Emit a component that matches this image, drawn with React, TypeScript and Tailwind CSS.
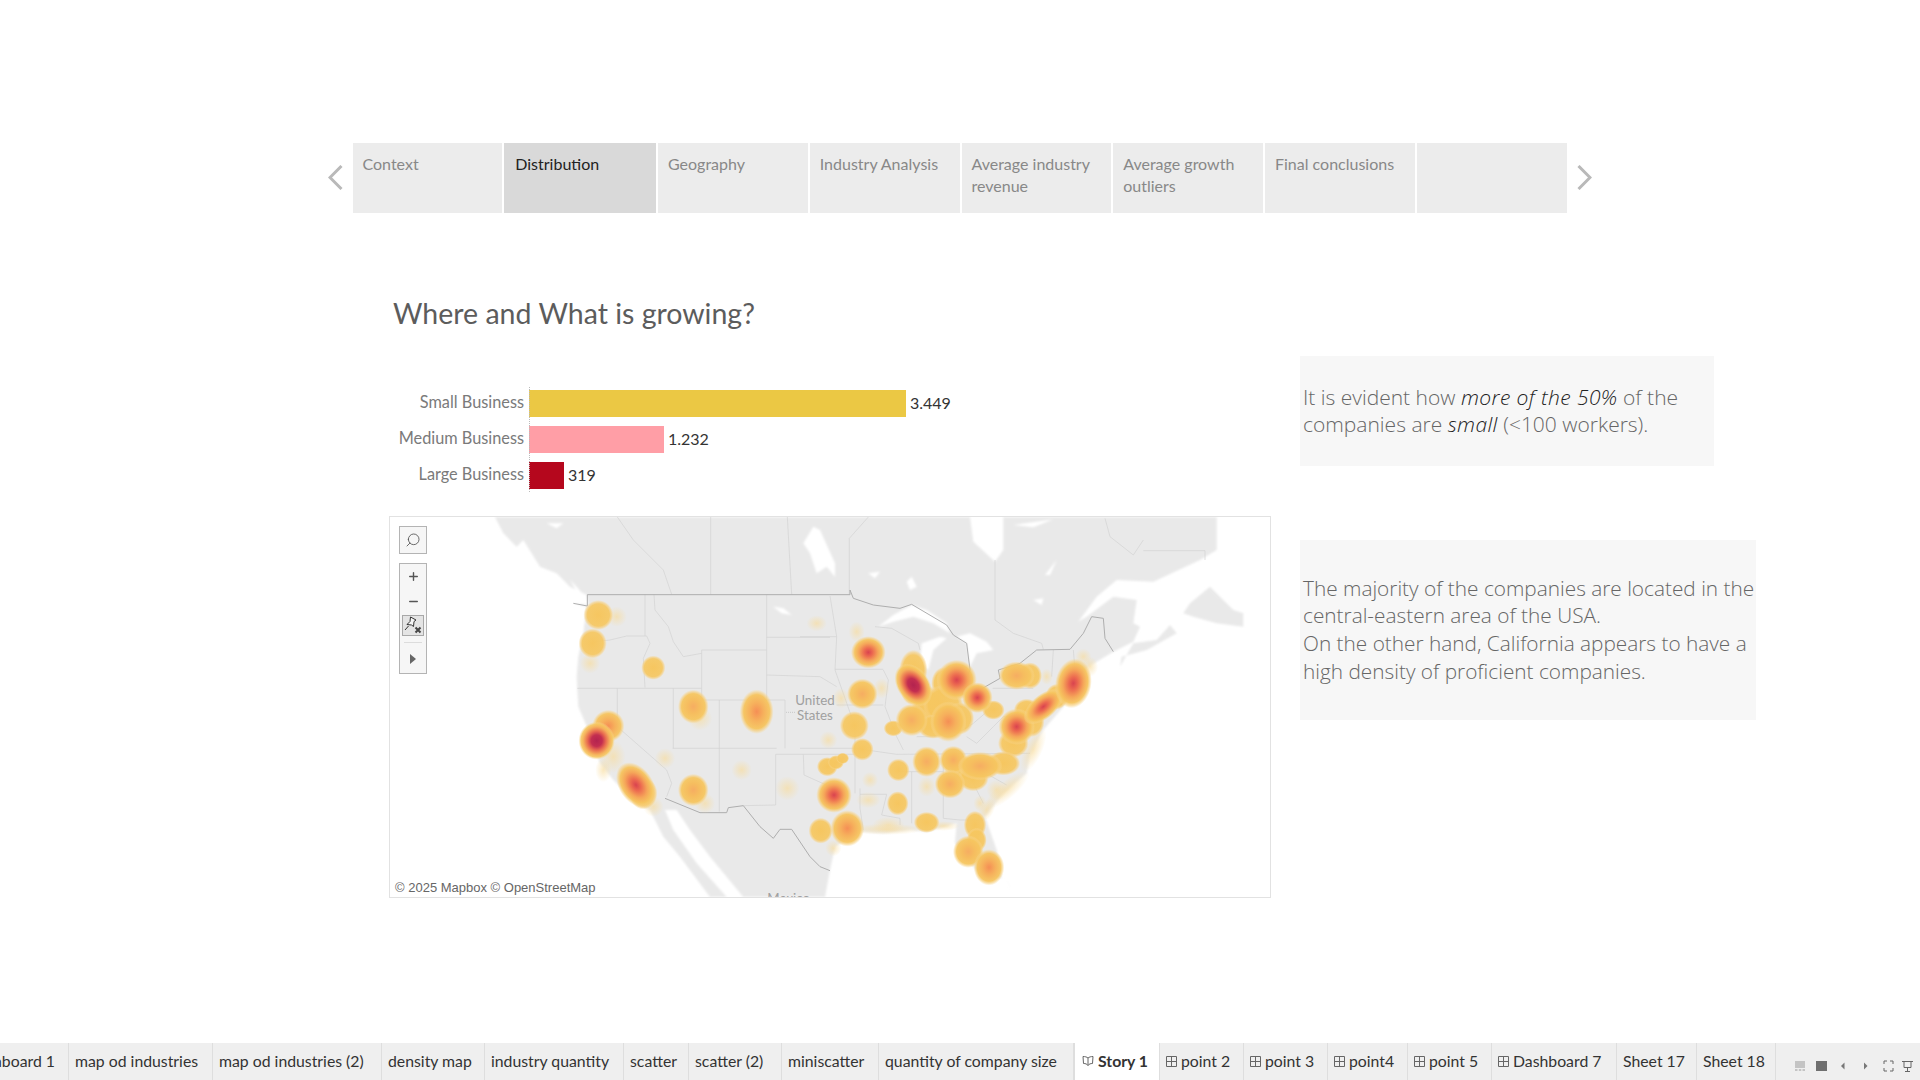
import { Minus, Plus, Search } from "lucide-react";

const storyPoints = [
  "Context",
  "Distribution",
  "Geography",
  "Industry Analysis",
  "Average industry revenue",
  "Average growth outliers",
  "Final conclusions",
  "",
];

const bars = [
  { label: "Small Business", value: "3.449", width: 377, color: "#ebc844" },
  { label: "Medium Business", value: "1.232", width: 135, color: "#ff9ea6" },
  { label: "Large Business", value: "319", width: 35, color: "#b5071d" },
];

const sheetTabs = [
  { label: "map od industries", w: 144 },
  { label: "map od industries (2)", w: 169 },
  { label: "density map", w: 103 },
  { label: "industry quantity", w: 139 },
  { label: "scatter", w: 65 },
  { label: "scatter (2)", w: 93 },
  { label: "miniscatter", w: 97 },
  { label: "quantity of company size", w: 195 },
];

const dashTabs = [
  { label: "point 2", w: 84, grid: true },
  { label: "point 3", w: 84, grid: true },
  { label: "point4", w: 80, grid: true },
  { label: "point 5", w: 84, grid: true },
  { label: "Dashboard 7", w: 125, grid: true },
  { label: "Sheet 17", w: 80, grid: false },
  { label: "Sheet 18", w: 79, grid: false },
];

// map coordinates are 3x page px, origin at page (380, 510)
const E = 1260;
const east = (pts: number[][]) => pts.map(([x, y]) => `${x + E},${y}`).join(" ");
const west = (pts: number[][]) => pts.map(([x, y]) => `${x},${y}`).join(" ");

const landPoints =
  west([[345, 21], [370, 70], [410, 110], [430, 90], [480, 170], [530, 190], [570, 230], [620, 255], [625, 285], [580, 280], [620, 290], [610, 370], [595, 440], [590, 500], [595, 590], [625, 660], [660, 760], [700, 810], [770, 880], [810, 900], [850, 980], [900, 1040], [990, 1161]]) +
  " " +
  east([[75, 1161], [90, 1080], [105, 1010], [180, 965], [250, 970], [330, 960], [380, 965], [470, 940], [465, 1000], [540, 1095], [605, 1105], [590, 1020], [555, 920], [610, 850], [680, 790], [690, 735], [730, 660], [790, 590], [865, 470], [940, 425], [1000, 395], [1020, 350], [1000, 340], [1010, 270], [940, 260], [860, 320], [835, 335], [890, 260], [950, 210], [1060, 215], [1200, 150], [1250, 120], [1250, 21], [610, 21], [610, 120], [585, 155], [520, 95], [510, 21]]);

const extraLand = [
  east([[960, 470], [965, 440], [1040, 420], [1130, 370], [1110, 345], [1070, 390], [1000, 400]]),
  east([[1150, 310], [1170, 280], [1230, 230], [1260, 260], [1300, 300], [1330, 310], [1330, 350], [1250, 340], [1180, 320]]),
  east([[615, 1105], [640, 1145], [625, 1120]]),
];

const water = [
  west([[855, 900], [890, 900], [930, 960], [990, 1040], [1090, 1161], [1040, 1161], [950, 1060], [880, 960]]),
  east([[235, 350], [280, 315], [335, 285], [380, 300], [440, 340], [450, 370], [400, 340], [340, 320], [280, 335]]),
  east([[360, 460], [365, 400], [420, 380], [440, 385], [400, 420], [385, 480]]),
  east([[470, 380], [500, 400], [510, 470], [530, 430], [580, 420], [560, 395], [510, 370]]),
  east([[10, 100], [40, 50], [60, 60], [105, 160], [105, 200], [80, 170], [50, 190], [30, 130]]),
  east([[320, 215], [335, 200], [350, 230], [330, 240]]),
  east([[735, 195], [770, 150], [750, 195]]),
  east([[640, 45], [760, 28], [700, 52]]),
  east([[700, 270], [730, 265], [725, 285]]),
  east([[205, 190], [240, 185], [225, 205]]),
  west([[1180, 290], [1210, 295], [1235, 315], [1205, 310]]),
  west([[570, 210], [590, 230], [615, 260], [590, 245]]),
  west([[500, 40], [550, 40], [530, 55]]),
];

const darkBorders = [
  west([[622, 254], [1350, 254]]) + " " + east([[150, 254], [150, 240], [160, 265], [220, 285], [300, 295], [335, 283], [440, 345], [460, 375], [500, 400], [510, 480], [490, 530], [530, 545], [600, 505], [595, 480], [660, 460], [710, 420], [810, 418], [850, 370], [875, 320], [910, 325], [915, 385], [940, 425]]),
  west([[855, 865], [960, 908], [1040, 908], [1045, 893], [1090, 887], [1140, 950], [1180, 985], [1200, 958], [1235, 958], [1290, 1040], [1320, 1070], [1350, 1082]]),
  west([[580, 280], [622, 288], [622, 254]]),
];

const lightBorders = [
  west([[712, 21], [760, 90], [850, 180], [875, 253]]),
  west([[992, 21], [992, 253]]),
  west([[1222, 21], [1235, 253]]),
  east([[205, 21], [148, 85], [148, 253]]),
  east([[585, 150], [585, 330], [640, 370], [725, 400], [730, 418]]),
  east([[915, 25], [930, 80], [1000, 135], [1030, 90]]),
  east([[1030, 122], [1215, 122], [1215, 150]]),
  west([[795, 254], [795, 378]]),
  west([[640, 395], [690, 390], [740, 378], [800, 378], [810, 400], [790, 445], [795, 533]]),
  west([[592, 535], [965, 535]]),
  west([[712, 535], [712, 650], [860, 780], [875, 820], [860, 860]]),
  west([[822, 254], [825, 300], [865, 350], [880, 395], [910, 440], [965, 430]]),
  west([[965, 420], [1160, 420]]),
  west([[965, 420], [965, 570], [1215, 570], [1215, 715]]),
  west([[880, 535], [880, 715]]),
  west([[1018, 570], [1018, 905]]),
  west([[878, 715], [1190, 715]]),
  west([[1160, 254], [1160, 570]]),
  west([[1160, 382], [1350, 382]]),
  west([[1160, 495], [1320, 500], [1370, 530]]),
  west([[1187, 733], [1187, 885], [1090, 887]]),
  west([[1187, 733], [1270, 733], [1272, 795], [1350, 830]]),
  east([[90, 258], [110, 380], [105, 480], [165, 650], [165, 850]]),
  east([[0, 380], [110, 380]]),
  east([[105, 478], [250, 478]]),
  east([[0, 715], [165, 715], [290, 733], [690, 730]]),
  east([[10, 733], [165, 733]]),
  east([[180, 835], [180, 895], [190, 960]]),
  east([[180, 853], [260, 853], [245, 915], [300, 925], [300, 945]]),
  east([[335, 785], [335, 940]]),
  east([[430, 755], [430, 925], [480, 930], [550, 930]]),
  east([[290, 785], [430, 785]]),
  east([[225, 350], [275, 355], [355, 400], [360, 420]]),
  east([[110, 585], [250, 585]]),
  east([[250, 480], [265, 510], [255, 590], [290, 680], [310, 720]]),
  east([[350, 680], [400, 680], [490, 660], [520, 640], [555, 610]]),
  east([[500, 680], [530, 700], [580, 650], [610, 620], [690, 620]]),
  east([[578, 535], [700, 535]]),
  east([[760, 420], [755, 500]]),
  east([[820, 420], [825, 480]]),
  east([[480, 795], [540, 780], [620, 825]]),
  east([[510, 800], [550, 880]]),
];

type Heat = "faint" | "y" | "light" | "o" | "r" | "d";
type Blob = [number, number, number, number, Heat, number?];

const blobs: Blob[] = [
  [655, 315, 37, 37, "y"], [638, 400, 35, 37, "y"], [820, 473, 30, 30, "y"], [940, 590, 38, 42, "light"],
  [1130, 605, 42, 55, "o"], [685, 648, 40, 40, "o"], [650, 692, 45, 47, "d"], [790, 850, 35, 40, "y"],
  [768, 825, 42, 62, "r", -35], [940, 840, 38, 40, "light"],
  [855, 745, 25, 25, "faint"], [1085, 780, 25, 25, "faint"], [1222, 835, 30, 30, "faint"], [630, 460, 25, 25, "faint"],
  [710, 320, 25, 25, "faint"], [960, 625, 30, 30, "faint"], [700, 740, 30, 40, "faint"], [975, 880, 25, 25, "faint"],
  [670, 780, 20, 30, "faint"], [820, 890, 25, 25, "faint"],
  ...(
    [
      [205, 427, 43, 40, "r"], [187, 552, 38, 38, "light"], [123, 565, 20, 25, "faint"], [245, 535, 20, 25, "faint"],
      [163, 647, 36, 36, "y"], [85, 690, 22, 22, "faint"], [187, 718, 28, 28, "y"],
      [82, 770, 26, 24, "y"], [108, 757, 20, 18, "y"], [128, 745, 16, 14, "y"],
      [102, 855, 44, 44, "r"], [62, 962, 30, 32, "y"], [142, 955, 42, 45, "o"],
      [295, 780, 28, 28, "y"], [380, 755, 36, 38, "light"], [380, 830, 22, 25, "faint"], [293, 880, 27, 30, "y"],
      [380, 937, 32, 26, "y"], [265, 945, 40, 20, "faint"], [335, 630, 40, 40, "light"], [280, 655, 24, 20, "y"],
      [340, 480, 35, 50, "y"], [345, 545, 35, 35, "y"], [340, 525, 40, 58, "d", -35], [470, 510, 50, 50, "r"],
      [430, 520, 30, 40, "y"], [532, 563, 38, 38, "r"],
      [385, 600, 42, 60, "y"], [430, 585, 50, 50, "y"], [480, 625, 35, 40, "y"], [400, 650, 40, 30, "y"],
      [445, 635, 45, 50, "o"], [580, 600, 28, 24, "y"], [650, 497, 45, 35, "light"], [690, 497, 30, 33, "y"],
      [650, 650, 45, 45, "r"], [640, 700, 38, 35, "y"], [695, 635, 32, 38, "y"], [680, 600, 32, 28, "y"], [770, 560, 28, 32, "y"],
      [730, 590, 30, 58, "r", 50], [820, 520, 45, 62, "r", 10], [460, 750, 35, 35, "light"], [495, 775, 38, 30, "y"],
      [540, 768, 55, 35, "light"], [610, 760, 42, 30, "y"], [450, 822, 38, 36, "light"], [520, 805, 38, 32, "y"], [525, 945, 28, 35, "y"],
      [530, 990, 25, 30, "y"], [505, 1025, 38, 40, "light"], [540, 880, 16, 20, "faint"], [567, 1072, 38, 45, "o"],
      [740, 500, 15, 20, "faint"], [850, 440, 20, 20, "faint"], [170, 365, 20, 25, "faint"], [50, 340, 25, 20, "faint"],
      [590, 840, 25, 25, "faint"], [205, 870, 30, 20, "faint"], [210, 810, 20, 20, "faint"],
      // soft halo along the coasts
      [700, 720, 22, 60, "faint", 25], [620, 840, 22, 70, "faint", 50], [870, 470, 20, 25, "faint"], [260, 958, 90, 14, "faint"],
      [430, 948, 40, 12, "faint"], [100, 1015, 20, 20, "faint"], [560, 900, 18, 30, "faint", 30],
    ] as Blob[]
  ).map(([x, y, rx, ry, k, rot]): Blob => [x + E, y, rx, ry, k, rot]),
];

const heatOrder: Heat[] = ["faint", "y", "light", "o", "r", "d"];

function UsMap() {
  return (
    <svg viewBox="30 21 2640 1140" className="block h-full w-full" preserveAspectRatio="none">
      <defs>
        <filter id="soft" x="-5%" y="-5%" width="110%" height="110%">
          <feGaussianBlur stdDeviation="3.500" />
        </filter>
        <radialGradient id="heat-faint">
          <stop offset="0" stopColor="#f8dc9c" stopOpacity="0.65" />
          <stop offset="1" stopColor="#f8dc9c" stopOpacity="0" />
        </radialGradient>
        <radialGradient id="heat-y">
          <stop offset="0" stopColor="#f6c660" />
          <stop offset="0.74" stopColor="#f6c760" stopOpacity="0.92" />
          <stop offset="0.88" stopColor="#f7cf7c" stopOpacity="0.6" />
          <stop offset="1" stopColor="#f8dc9c" stopOpacity="0" />
        </radialGradient>
        <radialGradient id="heat-light">
          <stop offset="0" stopColor="#f6ad62" />
          <stop offset="0.4" stopColor="#f6bd5f" />
          <stop offset="0.76" stopColor="#f6c660" stopOpacity="0.95" />
          <stop offset="0.88" stopColor="#f7cf7c" stopOpacity="0.6" />
          <stop offset="1" stopColor="#f8dc9c" stopOpacity="0" />
        </radialGradient>
        <radialGradient id="heat-o">
          <stop offset="0" stopColor="#f58f55" />
          <stop offset="0.4" stopColor="#f6b05c" />
          <stop offset="0.76" stopColor="#f6c45e" stopOpacity="0.95" />
          <stop offset="0.88" stopColor="#f7cf7c" stopOpacity="0.6" />
          <stop offset="1" stopColor="#f8dc9c" stopOpacity="0" />
        </radialGradient>
        <radialGradient id="heat-r">
          <stop offset="0" stopColor="#d9434f" />
          <stop offset="0.25" stopColor="#ec6a50" />
          <stop offset="0.55" stopColor="#f5a659" />
          <stop offset="0.78" stopColor="#f6c45e" stopOpacity="0.95" />
          <stop offset="0.9" stopColor="#f7cf7c" stopOpacity="0.55" />
          <stop offset="1" stopColor="#f8dc9c" stopOpacity="0" />
        </radialGradient>
        <radialGradient id="heat-d">
          <stop offset="0" stopColor="#b3234f" />
          <stop offset="0.3" stopColor="#c32e50" />
          <stop offset="0.5" stopColor="#e86a50" />
          <stop offset="0.72" stopColor="#f5b05c" />
          <stop offset="0.86" stopColor="#f6c760" stopOpacity="0.9" />
          <stop offset="1" stopColor="#f8dc9c" stopOpacity="0" />
        </radialGradient>
      </defs>
      <g filter="url(#soft)">
        <polygon points={landPoints} fill="#e9e9e9" />
        {extraLand.map((p) => (
          <polygon key={p} points={p} fill="#e9e9e9" />
        ))}
        {water.map((p) => (
          <polygon key={p} points={p} fill="#ffffff" />
        ))}
      </g>
      {lightBorders.map((p) => (
        <polyline key={p} points={p} fill="none" stroke="#d2d2d2" strokeWidth="2" />
      ))}
      {darkBorders.map((p) => (
        <polyline key={p} points={p} fill="none" stroke="#aeaeae" strokeWidth="3" />
      ))}
      <line x1="1218" y1="607" x2="1246" y2="607" stroke="#c8c8c8" strokeWidth="3" strokeDasharray="3 3" />
      <g fontFamily="Lato, sans-serif" fontSize="40" fill="#a0a0a0" textAnchor="middle">
        <text x="1305" y="584">United</text>
        <text x="1305" y="631">States</text>
        <text x="1226" y="1178">Mexico</text>
      </g>
      {heatOrder.flatMap((kind) =>
        blobs
          .filter((b) => b[4] === kind)
          .map(([x, y, rx, ry, k, rot], i) => (
            <ellipse
              key={`${k}${i}`}
              cx={x}
              cy={y}
              rx={rx * 1.22}
              ry={ry * 1.22}
              fill={`url(#heat-${k})`}
              transform={rot ? `rotate(${rot} ${x} ${y})` : undefined}
            />
          )),
      )}
    </svg>
  );
}

function MapControls() {
  return (
    <div className="absolute left-[9px] top-[9px] flex w-[28px] flex-col gap-[9px]">
      <div className="flex h-[28px] items-center justify-center border border-[#b4b4b4] bg-[#f6f6f6]">
        <Search className="h-[16px] w-[16px] -scale-x-100 text-[#555]" strokeWidth={1.3} />
      </div>
      <div className="flex h-[111px] flex-col items-center border border-[#b4b4b4] bg-[#f6f6f6]">
        <Plus className="mt-[6px] h-[13px] w-[13px] text-[#555]" strokeWidth={2.6} />
        <Minus className="mt-[12px] h-[13px] w-[13px] text-[#555]" strokeWidth={2.6} />
        <div className="mt-[7px] flex h-[21px] w-[22px] items-center justify-center border border-[#a8a8a8] bg-[#e4e4e4]">
          <svg width="20" height="19" viewBox="0 0 20 19" fill="none">
            <path d="M7.500 1l5.500 3-2 1.500-.5 5-2-1.500-4.500-.5 3-3z" stroke="#333" strokeWidth="1" fill="#f6f6f6" />
            <path d="M2 14l3.500-4" stroke="#333" strokeWidth="1" />
            <path d="M12.500 11.500l5 5M17.500 11.500l-5 5" stroke="#444" strokeWidth="2" />
          </svg>
        </div>
        <div className="mt-[6px] h-px w-[18px] bg-[#dcdcdc]" />
        <svg className="mt-[10px]" width="8" height="12" viewBox="0 0 8 12">
          <polygon points="1,1 7,6 1,11" fill="#666" />
        </svg>
      </div>
    </div>
  );
}

function GridIcon() {
  return (
    <svg width="11" height="11" viewBox="0 0 11 11" fill="none" className="mr-[4px] shrink-0" stroke="#666">
      <path d="M.5.5h10v10H.5zM5.500.5v10M.5 5.500h10" />
    </svg>
  );
}

function BookIcon() {
  return (
    <svg width="12" height="12" viewBox="0 0 12 12" fill="none" className="mr-[4px] shrink-0" stroke="#666">
      <path d="M1 1.500c2 0 4 .5 5 1.500 1-1 3-1.500 5-1.500l-.5 7c-2 0-3.500.5-4.500 2-1-1.500-2.500-2-4.500-2zM6 3v7.500" />
    </svg>
  );
}

function Chevron({ dir }: { dir: "left" | "right" }) {
  return (
    <svg width="15" height="25" viewBox="0 0 15 25" fill="none" className="block">
      <polyline
        points={dir === "left" ? "13.500,1 2,12.500 13.500,24" : "1.500,1 13,12.500 1.500,24"}
        stroke="#b9b9b9"
        strokeWidth="3"
      />
    </svg>
  );
}

function SheetTab({ label, w, grid }: { label: string; w: number; grid?: boolean }) {
  return (
    <div
      className="flex h-full shrink-0 items-center border-r border-[#dedede] pl-[6px] pb-[1px] whitespace-nowrap"
      style={{ width: w }}
    >
      {grid && <GridIcon />}
      {label}
    </div>
  );
}

export default function App() {
  return (
    <div className="flex h-[1080px] w-[1920px] flex-col overflow-hidden bg-white font-['Lato',sans-serif]">
      <nav className="ml-[328px] mt-[143px] flex h-[70px] items-center">
        <div className="-mt-[1px] w-[24.500px]">
          <Chevron dir="left" />
        </div>
        <div className="flex h-full w-[1214px] gap-[2px]">
          {storyPoints.map((p, i) => (
            <div
              key={i}
              className={
                i === 1
                  ? "flex-1 bg-[#d9d9d9] px-[11px] pt-[10px] text-[16px] leading-[22px] text-[#222]"
                  : "flex-1 bg-[#ececec] px-[10px] pt-[10px] text-[16px] leading-[22px] text-[#888]"
              }
            >
              {p}
            </div>
          ))}
        </div>
        <div className="-mt-[1px] ml-[10px]">
          <Chevron dir="right" />
        </div>
      </nav>

      <main className="flex flex-1 pl-[389px]">
        <div className="w-[882px]">
          <h1 className="ml-[4px] mt-[82px] text-[28.500px] font-normal leading-[37px] text-[#5c5c5c]">
            Where and What is growing?
          </h1>
          <div className="relative mt-[58px] flex flex-col gap-[9px]">
            <div className="absolute bottom-[-3px] left-[140px] top-[-3px] border-l border-dotted border-[#bbb]" />
            {bars.map((b) => (
              <div key={b.label} className="flex h-[27px] items-center">
                <div className="w-[135px] pb-[2px] text-right text-[16.300px] text-[#7a7a7a]">{b.label}</div>
                <div className="ml-[5px] h-full" style={{ width: b.width, background: b.color }} />
                <div className="ml-[4px] pb-[1px] text-[16px] text-[#333]">{b.value}</div>
              </div>
            ))}
          </div>
          <div className="relative mt-[27px] h-[382px] border border-[#e2e2e2]">
            <UsMap />
            <MapControls />
            <div className="absolute bottom-[1px] left-[3px] bg-white/60 px-[2px] font-['Liberation_Sans',sans-serif] text-[13px] leading-[17px] text-[#666]">
              © 2025 Mapbox © OpenStreetMap
            </div>
          </div>
        </div>

        <div className="ml-[29px]">
          <div className="mt-[143px] flex h-[110px] w-[414px] items-center bg-[#f7f7f7] pl-[3px] font-['Open_Sans',sans-serif] text-[21px] font-light leading-[27.500px] text-[#666]">
            <p>
              It is evident how <em className="tracking-[0.4px] text-[#222]">more of the 50%</em> of the
              <br />
              companies are <em className="tracking-[0.4px] text-[#222]">small</em> (&lt;100 workers).
            </p>
          </div>
          <div className="mt-[74px] flex h-[180px] w-[456px] items-center bg-[#f7f7f7] pl-[3px] font-['Open_Sans',sans-serif] text-[20.800px] font-light leading-[27.700px] text-[#666]">
            <p>
              The majority of the companies are located in the
              <br />
              central-eastern area of the USA.
              <br />
              On the other hand, California appears to have a
              <br />
              high density of proficient companies.
            </p>
          </div>
        </div>
      </main>

      <footer className="flex h-[37px] items-center bg-[#efefef] text-[15.800px] text-[#333]">
        <div className="flex h-full w-[69px] shrink-0 items-center justify-end overflow-hidden whitespace-nowrap border-r border-[#dedede] pb-[1px] pr-[13px]">
          Dashboard 1
        </div>
        {sheetTabs.map((t) => (
          <SheetTab key={t.label} label={t.label} w={t.w} />
        ))}
        <div className="flex h-full w-[86px] shrink-0 items-center whitespace-nowrap border-x border-[#dedede] bg-white pb-[1px] pl-[7px] font-bold">
          <BookIcon />
          Story 1
        </div>
        {dashTabs.map((t) => (
          <SheetTab key={t.label} label={t.label} w={t.w} grid={t.grid} />
        ))}
        <div className="flex flex-1 items-center pl-[18px] pt-[8px]">
          <svg width="130" height="14" viewBox="0 0 130 14">
            <rect x="1" y="2" width="10" height="7" fill="#c4c4c4" />
            <path d="M1 10h2.500v2H1zM4.800 10h2.500v2H4.800zM8.500 10H11v2H8.500z" fill="#c4c4c4" />
            <rect x="22" y="2" width="11" height="10" fill="#6f6f6f" />
            <polygon points="47,7 50.500,3.500 50.500,10.500" fill="#777" />
            <polygon points="70,3.500 73.500,7 70,10.500" fill="#777" />
            <path d="M90 5V2h3M96 2h3v3M99 9v3h-3M93 12h-3V9" fill="none" stroke="#666" />
            <path d="M108 2.500h11M110 2.500v6h7v-6M113.500 8.500v4M111 12.500h5" fill="none" stroke="#666" />
          </svg>
        </div>
      </footer>
    </div>
  );
}
